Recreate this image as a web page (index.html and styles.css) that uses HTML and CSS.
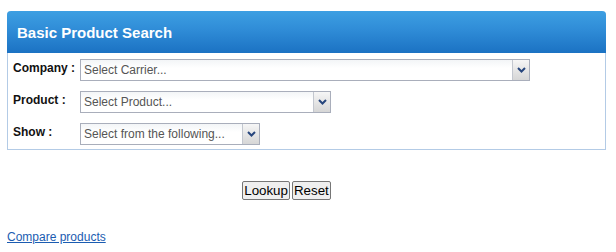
FILE: index.html
```html
<!DOCTYPE html>
<html lang="en">
<head>
    <meta charset="UTF-8">
    <title>Basic Product Search</title>
    <link rel="stylesheet" href="styles.css">
</head>
<body>
    <form class="search-form" onsubmit="return false;">
        <div class="panel">
            <div class="panel-head">Basic Product Search</div>
            <div class="panel-body">
                <label class="field-label">Company :</label>
                <div class="combo combo-wide">
                    <span class="combo-text">Select Carrier...</span>
                    <span class="combo-arrow">
                        <svg width="9" height="6" viewBox="0 0 9 6"><path d="M1 1 L4.5 4.5 L8 1" fill="none" stroke="#27467d" stroke-width="2"/></svg>
                    </span>
                </div>

                <label class="field-label">Product :</label>
                <div class="combo combo-mid">
                    <span class="combo-text">Select Product...</span>
                    <span class="combo-arrow">
                        <svg width="9" height="6" viewBox="0 0 9 6"><path d="M1 1 L4.5 4.5 L8 1" fill="none" stroke="#27467d" stroke-width="2"/></svg>
                    </span>
                </div>

                <label class="field-label">Show :</label>
                <div class="combo combo-small">
                    <span class="combo-text">Select from the following...</span>
                    <span class="combo-arrow">
                        <svg width="9" height="6" viewBox="0 0 9 6"><path d="M1 1 L4.5 4.5 L8 1" fill="none" stroke="#27467d" stroke-width="2"/></svg>
                    </span>
                </div>
            </div>
        </div>

        <div class="actions">
            <button type="button" class="btn">Lookup</button>
            <button type="reset" class="btn">Reset</button>
        </div>
    </form>

    <a class="compare-link" href="#">Compare products</a>
</body>
</html>
```

FILE: styles.css
```css
body {
    margin: 0;
    padding: 11px 10px 0 7px;
    font-family: 'Liberation Sans', Arial, sans-serif;
    background: #fff;
}

.panel {
    width: 597px;
    border: 1px solid #b3cbe6;
    border-top: 0;
    border-radius: 4px 4px 0 0;
}

.panel-head {
    height: 42px;
    margin: 0 -1px;
    padding-left: 10px;
    box-sizing: border-box;
    border-radius: 4px 4px 0 0;
    background: linear-gradient(to bottom, #3d9fe2 0%, #2f8cd7 45%, #1b72c3 100%);
    color: #fff;
    font-size: 15px;
    font-weight: bold;
    line-height: 43px;
}

.panel-body {
    display: grid;
    grid-template-columns: 67px auto;
    row-gap: 10px;
    padding: 6px 0 4px 5px;
    align-items: center;
}

.field-label {
    font-size: 12px;
    font-weight: bold;
    color: #111;
    align-self: start;
    padding-top: 2px;
}

.combo {
    display: flex;
    height: 22px;
    box-sizing: border-box;
    border: 1px solid #a9aebb;
    background: linear-gradient(to bottom, #f3f5f7 0%, #fff 40%, #fff 100%);
}

.combo-wide { width: 450px; }
.combo-mid { width: 251px; }
.combo-small { width: 180px; }

.combo-text {
    flex: 1;
    padding-left: 3px;
    font-size: 12px;
    line-height: 20px;
    color: #555;
    white-space: nowrap;
    overflow: hidden;
}

.combo-arrow {
    width: 16px;
    border-left: 1px solid #c3c7cf;
    background: linear-gradient(to bottom, #f6f6f6 0%, #e6e6e6 50%, #d6d6d6 100%);
    display: flex;
    align-items: center;
    justify-content: center;
}

.actions {
    width: 559px;
    margin-top: 31px;
    text-align: center;
    font-size: 0;
}

.btn {
    font-family: 'Liberation Sans', Arial, sans-serif;
    font-size: 13.33px;
    padding: 1px 1px;
    margin: 0 1px;
    border: 1px solid #767676;
    border-radius: 2px;
    background: #efefef;
    color: #000;
}

.compare-link {
    display: inline-block;
    margin-top: 30px;
    font-size: 12px;
    color: #1b5cb1;
}
```
